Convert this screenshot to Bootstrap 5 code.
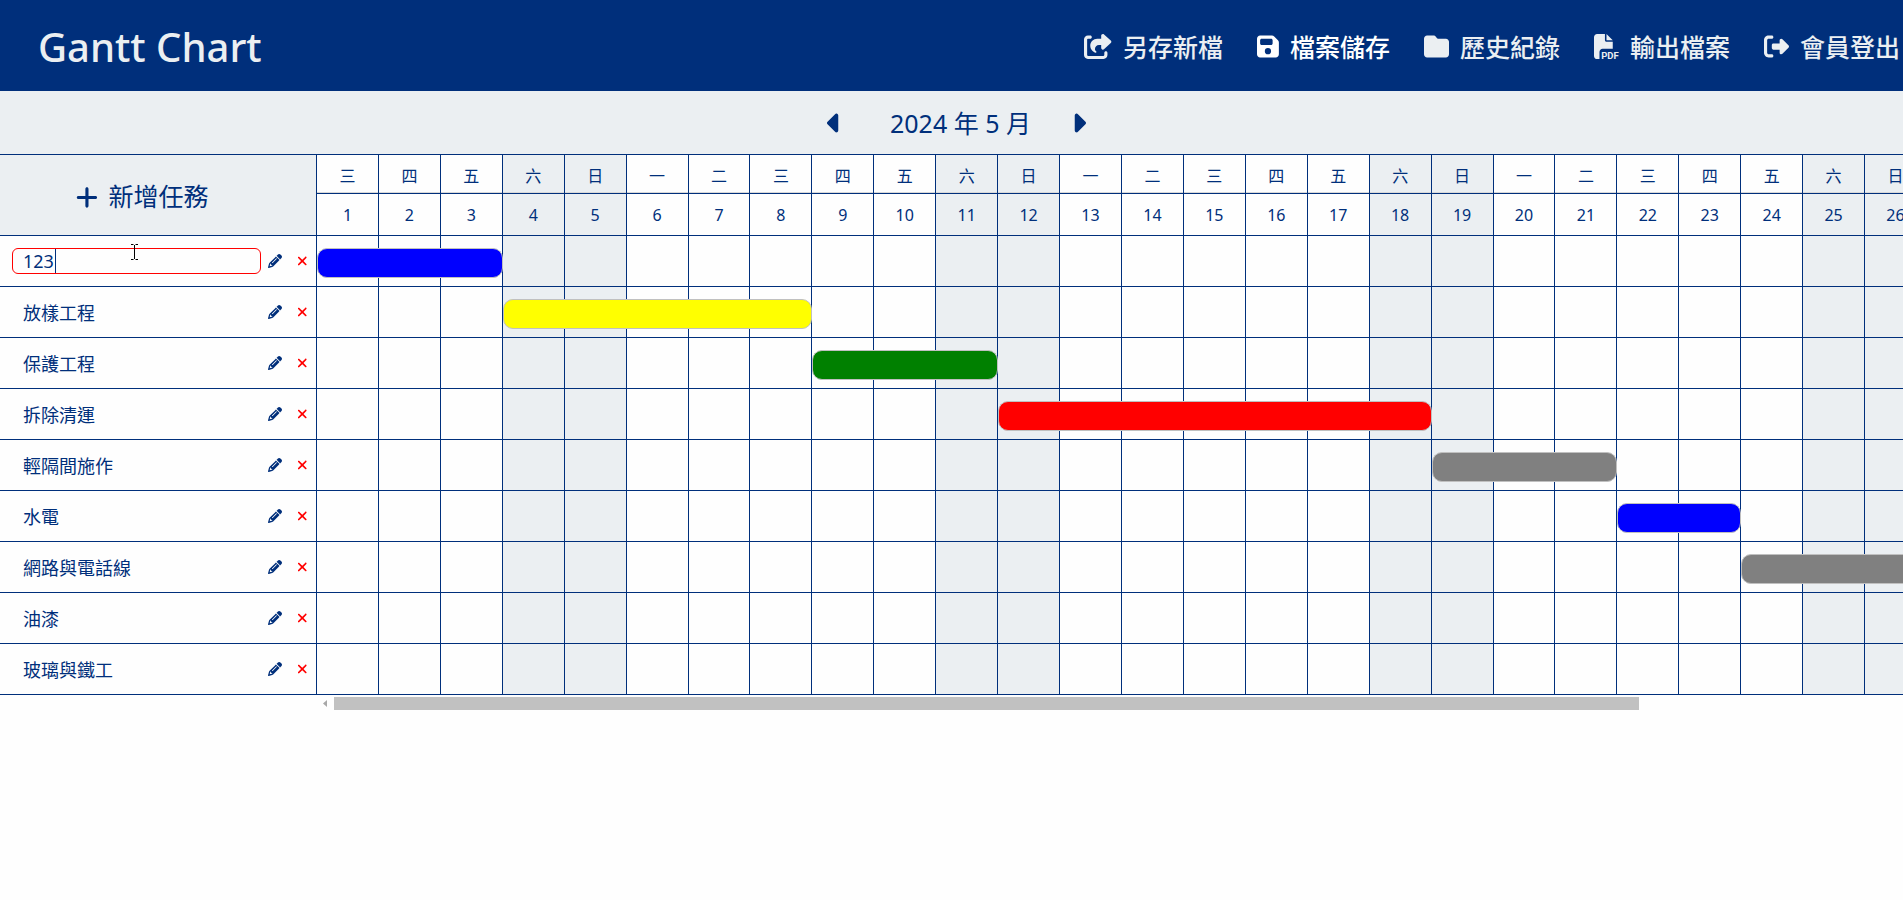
<!DOCTYPE html>
<html lang="zh-Hant">
<head>
<meta charset="utf-8">
<meta name="viewport" content="width=device-width, initial-scale=1">
<title>Gantt Chart</title>
<link href="https://cdn.jsdelivr.net/npm/bootstrap@5.3.0/dist/css/bootstrap.min.css" rel="stylesheet">
<style>
:root { --navy: #002f7b; --mist: #ebeff2; }
body { font-family: "Noto Sans", "Noto Sans CJK TC", sans-serif; color: var(--navy); background: #fefefe; overflow-x: hidden; }
.ico { height: 1em; width: auto; fill: currentColor; display: block; flex: none; overflow: visible; }
.plain-btn { border: 0; background: none; padding: 0; color: inherit; }

.site-bar { background: var(--navy); height: 91px; padding: 2px 3px 0 38px; }
.site-title { font-size: 40px; line-height: 48px; font-weight: 500; color: var(--mist); }
.site-menu { gap: 34px; font-size: 25px; line-height: 32px; }
.site-menu a { gap: 11px; color: var(--mist); font-weight: 500; white-space: nowrap; text-decoration: none; }
.site-menu a:hover, .site-menu a.current { color: #fff; }

.month-bar { background: var(--mist); height: 64px; border-bottom: 1px solid var(--navy); padding: 1px 0 0 10px; font-size: 25px; line-height: 36px; }
.month-bar .ico { font-size: 30px; }
.month-label { margin: 0 40px 0 48px; }

.task-col { width: 317px; border-right: 1px solid var(--navy); }
.task-add { height: 81px; background: var(--mist); border-bottom: 1px solid var(--navy); font-size: 25px; padding: 4px 32px 0 0; }
.task-add button { gap: 11px; }
.task-line { height: 51px; border-bottom: 1px solid var(--navy); padding: 0 9px 0 12px; }
.task-name { width: 100%; height: 26px; padding: 0 10px; border: 1px solid transparent; border-radius: 6px; background: transparent; color: var(--navy); font-size: 18px; line-height: 24px; outline: 0; }
.task-name.editing { border-color: red; }
.task-line .ico { font-size: 14px; }
.edit-btn { margin: 0 15px 0 7px; }
.delete-btn .ico { fill: red; }
.text-caret { left: 43px; top: 1px; width: 1px; height: 24px; background: var(--navy); }
.pointer { left: 118px; top: -4px; width: 9px; height: 16px; }

.days-pane { overflow: hidden; }
.day-table { width: 1920px; table-layout: fixed; border-collapse: separate; border-spacing: 0; }
.day-table th, .day-table td { padding: 0; border-right: 1px solid var(--navy); border-bottom: 1px solid var(--navy); text-align: center; font-size: 16px; font-weight: 400; line-height: 24px; }
.day-table .week-row th { height: 39px; padding-top: 4px; box-shadow: inset 0 -1px #d8d8d8; }
.day-table .date-row th { height: 42px; }
.day-table td { height: 51px; position: relative; }
.day-table .off { background: var(--mist); }
.task-bar { position: absolute; z-index: 1; left: 0; top: 12px; height: 30px; border: 1px solid silver; border-radius: 10px; }

.scroll-strip { height: 13px; margin-top: 2px; }
.scroll-strip .ico { width: 17px; height: 13px; fill: #a8a8a8; }
.scroll-thumb { width: 82.3%; background: #c1c1c1; }
</style>
</head>
<body>
<svg class="d-none" xmlns="http://www.w3.org/2000/svg">
  <symbol id="i-pencil" viewBox="0 0 512 512"><path d="M410.3 231l11.3-11.3-33.9-33.9-62.1-62.1L291.7 89.8l-11.3 11.3-22.6 22.6L58.6 322.9c-10.4 10.4-18 23.3-22.2 37.4L1 480.7c-2.5 8.4-.2 17.5 6.1 23.7s15.3 8.5 23.7 6.1l120.3-35.4c14.1-4.2 27-11.8 37.4-22.2L387.7 253.7 410.3 231zM160 399.4l-9.1 22.7c-4 3.1-8.5 5.4-13.3 6.9L59.4 452l23-78.1c1.4-4.9 3.8-9.4 6.9-13.3l22.7-9.1v32c0 8.800 7.200 16 16 16h32zM362.7 18.7L348.3 33.2 325.7 55.8 314.3 67.1l33.9 33.9 62.1 62.1 33.9 33.9 11.3-11.3 22.6-22.6 14.5-14.5c25-25 25-65.5 0-90.5L453.3 18.7c-25-25-65.5-25-90.5 0zm-47.4 168l-144 144c-6.2 6.2-16.4 6.2-22.6 0s-6.2-16.4 0-22.6l144-144c6.2-6.2 16.4-6.2 22.6 0s6.2 16.4 0 22.6z"/></symbol>
  <symbol id="i-x" viewBox="0 0 384 512"><path d="M342.6 150.6c12.5-12.5 12.5-32.8 0-45.3s-32.8-12.5-45.3 0L192 210.7 86.6 105.4c-12.5-12.5-32.8-12.5-45.3 0s-12.5 32.8 0 45.3L146.7 256 41.4 361.4c-12.5 12.5-12.5 32.8 0 45.3s32.8 12.5 45.3 0L192 301.3 297.4 406.6c12.5 12.5 32.8 12.5 45.3 0s12.5-32.8 0-45.3L237.3 256 342.6 150.6z"/></symbol>
</svg>

<header class="site-bar d-flex align-items-center justify-content-between">
  <h1 class="site-title mb-0">Gantt Chart</h1>
  <nav class="site-menu d-flex align-items-center">
    <a href="#" class="d-flex align-items-center"><svg class="ico" viewBox="0 0 576 512"><path d="M352 224H305.500c-45 0-81.500 36.500-81.500 81.500c0 22.300 10.300 34.300 19.200 40.500c6.800 4.700 12.800 12 12.800 20.300c0 9.800-8 17.800-17.800 17.800h-2.500c-2.400 0-4.800-.4-7.100-1.400C210.800 374.800 128 333.400 128 240c0-79.500 64.500-144 144-144h80V34.700C352 15.500 367.500 0 386.700 0c8.600 0 16.800 3.200 23.200 8.900L548.100 133.300c7.600 6.800 11.900 16.500 11.900 26.700s-4.300 19.900-11.900 26.700l-139 125.100c-5.900 5.300-13.500 8.200-21.400 8.200H384c-17.700 0-32-14.300-32-32V224zM80 96c-8.800 0-16 7.200-16 16V432c0 8.800 7.200 16 16 16H400c8.800 0 16-7.200 16-16V384c0-17.700 14.300-32 32-32s32 14.300 32 32v48c0 44.200-35.800 80-80 80H80c-44.200 0-80-35.800-80-80V112C0 67.800 35.800 32 80 32h48c17.700 0 32 14.300 32 32s-14.300 32-32 32H80z"/></svg>另存新檔</a>
    <a href="#" class="current d-flex align-items-center"><svg class="ico" viewBox="0 0 448 512"><path d="M64 32C28.700 32 0 60.700 0 96V416c0 35.300 28.700 64 64 64H384c35.300 0 64-28.700 64-64V173.300c0-17-6.700-33.300-18.700-45.300L352 50.700C340 38.700 323.700 32 306.700 32H64zm0 96c0-17.700 14.300-32 32-32H288c17.700 0 32 14.300 32 32v64c0 17.700-14.300 32-32 32H96c-17.700 0-32-14.300-32-32V128zM224 288a64 64 0 1 1 0 128 64 64 0 1 1 0-128z"/></svg>檔案儲存</a>
    <a href="#" class="d-flex align-items-center"><svg class="ico" viewBox="0 0 512 512"><path d="M64 480H448c35.300 0 64-28.700 64-64V160c0-35.300-28.700-64-64-64H288c-10.100 0-19.600-4.700-25.600-12.800L243.200 57.600C231.100 41.500 212.100 32 192 32H64C28.700 32 0 60.700 0 96V416c0 35.300 28.700 64 64 64z"/></svg>歷史紀錄</a>
    <a href="#" class="d-flex align-items-center"><svg class="ico" viewBox="0 0 512 512"><path d="M0 64C0 28.700 28.700 0 64 0H224V128c0 17.700 14.300 32 32 32H384V304H176c-35.300 0-64 28.700-64 64V512H64c-35.300 0-64-28.700-64-64V64zm384 64H256V0L384 128z"/><text x="148" y="508" font-family="Roboto" font-weight="700" font-size="195">PDF</text></svg>輸出檔案</a>
    <a href="#" class="d-flex align-items-center"><svg class="ico" viewBox="0 0 512 512"><path d="M377.900 105.900L500.700 228.700c7.200 7.200 11.300 17.100 11.300 27.300s-4.100 20.100-11.300 27.300L377.900 406.100c-6.400 6.400-15 9.900-24 9.900c-18.700 0-33.900-15.200-33.900-33.900l0-62.100-128 0c-17.700 0-32-14.300-32-32l0-64c0-17.700 14.300-32 32-32l128 0 0-62.100c0-18.700 15.200-33.900 33.900-33.900c9 0 17.600 3.600 24 9.900zM160 96L96 96c-17.700 0-32 14.300-32 32l0 256c0 17.700 14.300 32 32 32l64 0c17.700 0 32 14.300 32 32s-14.300 32-32 32l-64 0c-53 0-96-43-96-96L0 128C0 75 43 32 96 32l64 0c17.700 0 32 14.300 32 32s-14.300 32-32 32z"/></svg>會員登出</a>
  </nav>
</header>

<div class="month-bar d-flex align-items-center justify-content-center">
  <button type="button" class="plain-btn" aria-label="上個月"><svg class="ico" viewBox="0 0 256 512"><path d="M9.400 278.600c-12.500-12.500-12.500-32.800 0-45.300l128-128c9.200-9.200 22.900-11.900 34.900-6.900s19.800 16.600 19.800 29.600l0 256c0 12.900-7.800 24.600-19.800 29.600s-25.700 2.200-34.900-6.900l-128-128z"/></svg></button>
  <span class="month-label">2024 年 5 月</span>
  <button type="button" class="plain-btn" aria-label="下個月"><svg class="ico" viewBox="0 0 256 512"><path d="M246.600 278.600c12.500-12.500 12.500-32.800 0-45.300l-128-128c-9.200-9.200-22.900-11.900-34.900-6.900s-19.800 16.600-19.800 29.600l0 256c0 12.900 7.800 24.600 19.800 29.600s25.700 2.200 34.900-6.900l128-128z"/></svg></button>
</div>

<main class="d-flex align-items-start">
  <section class="task-col flex-shrink-0">
    <div class="task-add d-flex align-items-center justify-content-center">
      <button type="button" class="plain-btn d-flex align-items-center"><svg class="ico" viewBox="0 0 448 512"><path d="M256 80c0-17.700-14.300-32-32-32s-32 14.300-32 32V224H48c-17.700 0-32 14.300-32 32s14.300 32 32 32H192V432c0 17.700 14.300 32 32 32s32-14.300 32-32V288H400c17.700 0 32-14.300 32-32s-14.300-32-32-32H256V80z"/></svg>新增任務</button>
    </div>
    <div id="taskList"></div>
  </section>
  <section class="days-pane flex-grow-1">
    <table class="day-table">
      <thead>
        <tr class="week-row" id="weekRow"></tr>
        <tr class="date-row" id="dateRow"></tr>
      </thead>
      <tbody id="dayRows"></tbody>
    </table>
    <div class="scroll-strip d-flex" aria-hidden="true">
      <svg class="ico" viewBox="0 0 17 13"><path d="M10 3v7L6 6.500z"/></svg>
      <div class="scroll-thumb"></div>
    </div>
  </section>
</main>

<script src="https://cdn.jsdelivr.net/npm/bootstrap@5.3.0/dist/js/bootstrap.bundle.min.js"></script>
<script>
const DAYS = 31;
const WEEK = ['日', '一', '二', '三', '四', '五', '六'];
const FIRST_WEEKDAY = 3;
const tasks = [
  { name: '123', start: 1, days: 3, color: 'blue', editing: true },
  { name: '放樣工程', start: 4, days: 5, color: 'yellow' },
  { name: '保護工程', start: 9, days: 3, color: 'green' },
  { name: '拆除清運', start: 12, days: 7, color: 'red' },
  { name: '輕隔間施作', start: 19, days: 3, color: 'gray' },
  { name: '水電', start: 22, days: 2, color: 'blue' },
  { name: '網路與電話線', start: 24, days: 5, color: 'gray' },
  { name: '油漆' },
  { name: '玻璃與鐵工' }
];
const days = Array.from({ length: DAYS }, (_, i) => {
  const w = (FIRST_WEEKDAY + i) % 7;
  return { date: i + 1, label: WEEK[w], cls: w === 0 || w === 6 ? ' class="off"' : '' };
});

weekRow.innerHTML = days.map(d => `<th${d.cls}>${d.label}</th>`).join('');
dateRow.innerHTML = days.map(d => `<th${d.cls}>${d.date}</th>`).join('');

// The bar sits in the cell of its first day and spans the following ones, borders included.
dayRows.innerHTML = tasks.map(t => '<tr>' + days.map(d => {
  const bar = t.start === d.date
    ? `<div class="task-bar" style="width:calc(${t.days * 100}% + ${t.days}px);background:${t.color}"></div>` : '';
  return `<td${d.cls}>${bar}</td>`;
}).join('') + '</tr>').join('');

// Text caret and mouse pointer lie over the name that is being edited.
const editMarks = '<span class="text-caret position-absolute"></span>' +
  '<svg class="pointer position-absolute" viewBox="0 0 9 16" fill="none" stroke="#000"><path d="M1 .5h2.500M5.500 .5H8M4.500 1v14M1 15.500h2.500M5.500 15.500H8"/></svg>';
taskList.innerHTML = tasks.map(t => `
  <div class="task-line d-flex align-items-center">
    <div class="position-relative flex-grow-1 d-flex">
      <input type="text" class="task-name${t.editing ? ' editing' : ''}" value="${t.name}" aria-label="任務名稱">
      ${t.editing ? editMarks : ''}
    </div>
    <button type="button" class="plain-btn edit-btn" aria-label="編輯"><svg class="ico" viewBox="0 0 512 512"><use href="#i-pencil"/></svg></button>
    <button type="button" class="plain-btn delete-btn" aria-label="刪除"><svg class="ico" viewBox="0 0 384 512"><use href="#i-x"/></svg></button>
  </div>`).join('');
</script>
</body>
</html>
